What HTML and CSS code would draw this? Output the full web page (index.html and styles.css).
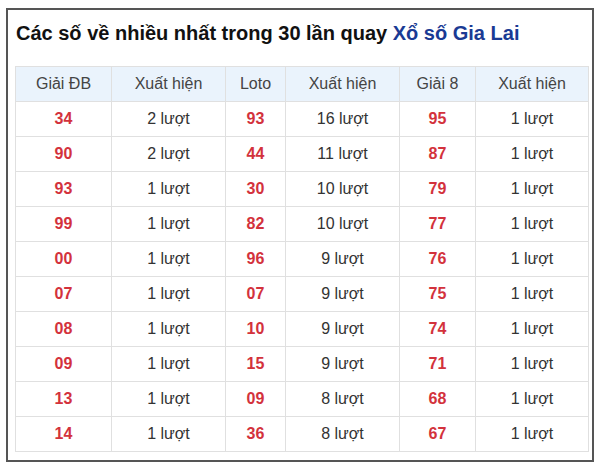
FILE: index.html
```html
<!DOCTYPE html>
<html lang="vi">
<head>
<meta charset="utf-8">
<link rel="stylesheet" href="styles.css">
</head>
<body>
<div class="box">
  <h2 class="title">Các số về nhiều nhất trong 30 lần quay <span class="site">Xổ số Gia Lai</span></h2>
  <table class="stats">
    <colgroup>
      <col class="c1"><col class="c2"><col class="c3"><col class="c4"><col class="c5"><col class="c6">
    </colgroup>
    <thead>
      <tr><th>Giải ĐB</th><th>Xuất hiện</th><th>Loto</th><th>Xuất hiện</th><th>Giải 8</th><th>Xuất hiện</th></tr>
    </thead>
    <tbody>
      <tr><td class="num">34</td><td>2 lượt</td><td class="num">93</td><td>16 lượt</td><td class="num">95</td><td>1 lượt</td></tr>
      <tr><td class="num">90</td><td>2 lượt</td><td class="num">44</td><td>11 lượt</td><td class="num">87</td><td>1 lượt</td></tr>
      <tr><td class="num">93</td><td>1 lượt</td><td class="num">30</td><td>10 lượt</td><td class="num">79</td><td>1 lượt</td></tr>
      <tr><td class="num">99</td><td>1 lượt</td><td class="num">82</td><td>10 lượt</td><td class="num">77</td><td>1 lượt</td></tr>
      <tr><td class="num">00</td><td>1 lượt</td><td class="num">96</td><td>9 lượt</td><td class="num">76</td><td>1 lượt</td></tr>
      <tr><td class="num">07</td><td>1 lượt</td><td class="num">07</td><td>9 lượt</td><td class="num">75</td><td>1 lượt</td></tr>
      <tr><td class="num">08</td><td>1 lượt</td><td class="num">10</td><td>9 lượt</td><td class="num">74</td><td>1 lượt</td></tr>
      <tr><td class="num">09</td><td>1 lượt</td><td class="num">15</td><td>9 lượt</td><td class="num">71</td><td>1 lượt</td></tr>
      <tr><td class="num">13</td><td>1 lượt</td><td class="num">09</td><td>8 lượt</td><td class="num">68</td><td>1 lượt</td></tr>
      <tr><td class="num">14</td><td>1 lượt</td><td class="num">36</td><td>8 lượt</td><td class="num">67</td><td>1 lượt</td></tr>
    </tbody>
  </table>
</div>
</body>
</html>
```
FILE: styles.css
```css
html, body {
  margin: 0;
  padding: 0;
  background: #fff;
}
body {
  font-family: "Liberation Sans", Arial, sans-serif;
  color: #222;
}
.box {
  margin: 8px 0 0 6px;
  width: 584px;
  height: 450px;
  border: 2px solid #555;
  box-sizing: content-box;
  padding: 0;
  display: flex;
  flex-direction: column;
}
.title {
  margin: 11px 0 0 8px;
  font-size: 20px;
  line-height: 24px;
  font-weight: bold;
  color: #111;
}
.site {
  color: #1a3a94;
}
.stats {
  margin: 21px 0 0 7px;
  width: 573px;
  border-collapse: collapse;
  table-layout: fixed;
}
.c1 { width: 96px; }
.c2 { width: 114px; }
.c3 { width: 60px; }
.c4 { width: 114px; }
.c5 { width: 76px; }
.c6 { width: 113px; }
.stats th, .stats td {
  border: 1px solid #e0e0e0;
  height: 34px;
  padding: 0;
  text-align: center;
  vertical-align: middle;
  font-size: 16px;
  color: #333;
}
.stats th {
  font-weight: normal;
  background: #eaf3fc;
  color: #444;
}
.stats td.num {
  color: #d3323c;
  font-weight: bold;
}
```
